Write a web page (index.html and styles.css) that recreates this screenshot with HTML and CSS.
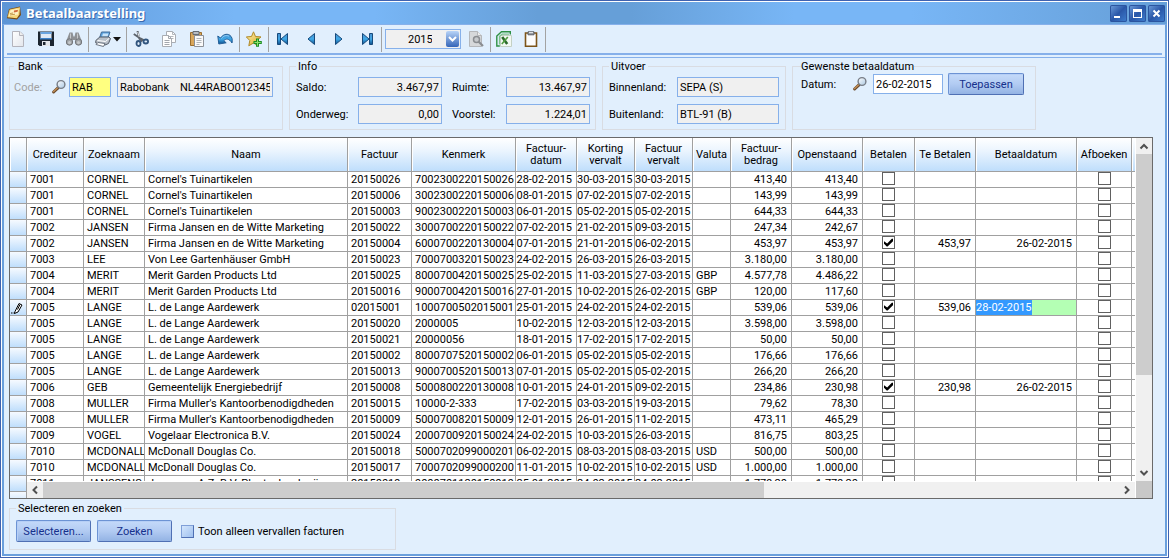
FILE: index.html
```html
<!DOCTYPE html>
<html lang="nl">
<head>
<meta charset="utf-8">
<title>Betaalbaarstelling</title>
<link rel="stylesheet" href="styles.css">
</head>
<body>
<svg class="defs" aria-hidden="true">
  <defs>
    <linearGradient id="blue" x1="0" y1="0" x2="0" y2="1"><stop offset="0" stop-color="#4a90cf"/><stop offset=".5" stop-color="#3fa9e8"/><stop offset="1" stop-color="#0e4f8c"/></linearGradient>
    <linearGradient id="gold" x1="0" y1="0" x2="1" y2="1"><stop offset="0" stop-color="#fff3b0"/><stop offset="1" stop-color="#d9a520"/></linearGradient>
    <linearGradient id="lens" x1="0" y1="0" x2="1" y2="1"><stop offset="0" stop-color="#ffffff"/><stop offset="1" stop-color="#a9c6e0"/></linearGradient>
    <linearGradient id="paper" x1="0" y1="0" x2="1" y2="1"><stop offset="0" stop-color="#ffffff"/><stop offset="1" stop-color="#e3e6ec"/></linearGradient>
    <symbol id="magnifier" viewBox="0 0 16 16">
      <path d="M2.600 13 7 8.800" stroke="#6b4a2c" stroke-width="3" stroke-linecap="round"/>
      <path d="M2.600 12.500 6.400 8.900" stroke="#c29058" stroke-width="1.400" stroke-linecap="round"/>
      <circle cx="10" cy="5.500" r="3.900" fill="url(#lens)" stroke="#777d86" stroke-width="1.400"/>
    </symbol>
  </defs>
</svg>
<div class="window">
  <header class="titlebar">
    <svg class="app-icon" viewBox="0 0 16 16"><path d="M3 4 14 1.500 15 10 11 14.500.8 13.200z" fill="#7a4a10"/><path d="M3.600 4.400 14 2.200 13.400 9.600 10.800 13.200 1.500 12.200z" fill="#f6d77c"/><path d="m4.500 5.200 8-1.400-.5 5.800-9 1.600z" fill="#fff2c4"/><path d="m8 5.500 4-.7-.4 2-3.800.6z" fill="#d26a3a"/><path d="m4 8.500 3-.5M4 10l5-.8" stroke="#c49a4a"/></svg>
    <h1 class="title">Betaalbaarstelling</h1>
    <div class="window-buttons">
      <button class="winbtn" aria-label="Minimaliseren"><svg viewBox="0 0 17 17"><path d="M4 11h6v2H4z" fill="#fff"/></svg></button>
      <button class="winbtn" aria-label="Maximaliseren"><svg viewBox="0 0 17 17"><path d="M4 4h9v9H4zM5 7v5h7V7z" fill="#fff" fill-rule="evenodd"/></svg></button>
      <button class="winbtn" aria-label="Sluiten"><svg viewBox="0 0 17 17"><path d="m5.500 5.500 6 6m0-6-6 6" stroke="#fff" stroke-width="2"/></svg></button>
    </div>
  </header>
  <div class="client">
    <div class="toolbar" role="toolbar">
      <button class="tool" aria-label="Nieuw"><svg viewBox="0 0 16 16"><path d="M2.500.5h7.500l3.500 3.500v11.500h-11z" fill="url(#paper)" stroke="#b4b4bc"/><path d="M9.500.5v4h4" fill="#eee" stroke="#b4b4bc"/></svg></button>
      <button class="tool" aria-label="Opslaan"><svg viewBox="0 0 16 16"><path d="M0 .5h16V15H1.500L0 13.500z" fill="#1d2630"/><path d="M2.500 1h11v6h-11z" fill="#dfeaf6"/><path d="M2.500 1h11v2h-11z" fill="#6aa5e0"/><path d="M2 7h12v1.500H2z" fill="#3f82c8"/><path d="M4 10h8v5H4z" fill="#e4e6ea"/><path d="M5 11h2.500v3H5z" fill="#1d2630"/></svg></button>
      <button class="tool" aria-label="Zoeken"><svg viewBox="0 0 16 16"><path d="M3.500 1.500h3l1 4h1l1-4h3l3 8v3.500h-5V9h-5v4h-5V9.500z" fill="#8f9296"/><circle cx="3.500" cy="11" r="3.200" fill="#9ea2a6" stroke="#74777b"/><circle cx="12.500" cy="11" r="3.200" fill="#9ea2a6" stroke="#74777b"/><path d="M4.500 2.500v5M11.500 2.500v5" stroke="#c8cacc"/><circle cx="3.500" cy="11.500" r="1.500" fill="#c5c8cb"/><circle cx="12.500" cy="11.500" r="1.500" fill="#c5c8cb"/></svg></button>
      <span class="separator"></span>
      <button class="tool tool-menu" aria-label="Afdrukken"><svg viewBox="0 0 16 16"><path d="M6.500 1h8.500l-2 6H4.500z" fill="#5ba3e0" stroke="#456c96"/><path d="M8 2.500h5.500l-1 3H7z" fill="#c9e4fa"/><path d="m.8 9.500 4-3.500h9l1.700 1.500-2 5-3.500 1.500L.8 12z" fill="#b9c0c9" stroke="#545b66"/><path d="m2.500 9.500 8 1 3.500-3" stroke="#fff" fill="none"/><path d="m3 11.500 7 1-1.500 3-7.500-2z" fill="#fff" stroke="#6c7480"/></svg><svg class="caret" viewBox="0 0 8 5"><path d="M0 0h8L4 4.500z" fill="#111"/></svg></button>
      <span class="separator"></span>
      <button class="tool" aria-label="Knippen"><svg viewBox="0 0 16 16"><path d="m4.500 0 1.800 7.500 3 3M.8 3l6.500 4.500 4 2" stroke="#5e646c" stroke-width="2" fill="none"/><path d="m4.700 1 1.600 5" stroke="#e4e7ea"/><ellipse cx="5.500" cy="12.500" rx="2" ry="2.500" fill="#dceaf8" stroke="#31557e" stroke-width="1.800"/><ellipse cx="12.800" cy="10.500" rx="2.300" ry="2" fill="#dceaf8" stroke="#31557e" stroke-width="1.800"/></svg></button>
      <button class="tool" aria-label="Kopiëren"><svg viewBox="0 0 16 16"><path d="M5.500.5h6l3 3v8h-9z" fill="#fff" stroke="#a9adb3"/><path d="M11.500.5v3h3M7.500 5.500h5M7.500 7.500h5" stroke="#b3b7bd" fill="none"/><path d="M1.500 4.500h6l3 3v8h-9z" fill="#fff" stroke="#a9adb3"/><path d="M7.500 4.500v3h3M3.500 9.500h5M3.500 11.500h5M3.500 13.500h5" stroke="#a3a7ad" fill="none"/></svg></button>
      <button class="tool" aria-label="Plakken"><svg viewBox="0 0 16 16"><path d="M1.500 1.500h11v13h-11z" fill="#d9a75c" stroke="#9a6f30"/><path d="M4 .5h6v3H4z" fill="#b8bdc4" stroke="#666c74"/><path d="M5.500 4.500h9v11h-9z" fill="#fafafa" stroke="#8d9198"/><path d="M7.500 7.500h5M7.500 9.500h5M7.500 11.500h5M7.500 13.500h3" stroke="#b1b5ba"/></svg></button>
      <button class="tool" aria-label="Ongedaan maken"><svg viewBox="0 0 16 16"><path d="m.8 5 1 8 7.400-1.200-2.400-2c2-2.300 5-2.800 8.200 2.200.8-3.500 0-6.500-2.500-8C9.500 2.400 6 3.500 3.500 7z" fill="url(#blue)" stroke="#235f98"/><path d="M4.500 7.500c2-3 5-3.500 7.500-2.300" stroke="#8fcdf5" fill="none"/></svg></button>
      <span class="separator"></span>
      <button class="tool" aria-label="Favoriet toevoegen"><svg viewBox="0 0 16 16"><path d="m7.500.8 2 4.700 5.500.4-4 3.600 1 5.300-4.500-2.800-4.700 2.800 1-5.300L.3 5.900l5.200-.4z" fill="url(#gold)" stroke="#b08a2a"/><path d="M10 7.500h3V10h2.800v3H13v2.700h-3V13H7.500v-3H10z" fill="#1d8f24"/><path d="M11 8.500h1v2.500h2.800v1H12v2.700h-1V12H8.500v-1H11z" fill="#8fe06e"/></svg></button>
      <span class="separator"></span>
      <button class="tool" aria-label="Eerste"><svg viewBox="0 0 16 16"><path d="M2.500 2.500h3v11h-3z" fill="url(#blue)" stroke="#164a7c"/><path d="M12.500 2.500v11L6 8z" fill="url(#blue)" stroke="#164a7c"/></svg></button>
      <button class="tool" aria-label="Vorige"><svg viewBox="0 0 16 16"><path d="M11.500 2.500v11L5 8z" fill="url(#blue)" stroke="#164a7c"/></svg></button>
      <button class="tool" aria-label="Volgende"><svg viewBox="0 0 16 16"><path d="M4.500 2.500v11L11 8z" fill="url(#blue)" stroke="#164a7c"/></svg></button>
      <button class="tool" aria-label="Laatste"><svg viewBox="0 0 16 16"><path d="M10.500 2.500h3v11h-3z" fill="url(#blue)" stroke="#164a7c"/><path d="M3.500 2.500v11L10 8z" fill="url(#blue)" stroke="#164a7c"/></svg></button>
      <span class="separator"></span>
      <div class="year">
        <select class="year-select" aria-label="Boekjaar"><option>2015</option></select>
        <svg class="year-arrow" viewBox="0 0 13 16"><path d="m3 6 3.500 3.500L10 6" stroke="#fff" stroke-width="2" fill="none"/></svg>
      </div>
      <button class="tool" aria-label="Voorbeeld"><svg viewBox="0 0 16 16"><path d="M1.500.5h8l4 4v11h-12z" fill="#d6d8da" stroke="#b5b7ba"/><path d="M9.500.5v4h4" fill="#eee" stroke="#b5b7ba"/><circle cx="8.500" cy="8.500" r="3" fill="#c6c9cc" stroke="#8a8d91" stroke-width="1.500"/><path d="m10.500 10.500 4.500 4.500" stroke="#8a8d91" stroke-width="2.200"/></svg></button>
      <span class="separator"></span>
      <button class="tool tool-excel" aria-label="Exporteren naar Excel"><svg viewBox="0 0 16 16"><path d="M4.500 4.500h11v11h-11z" fill="#f2f8f2" stroke="#c4d0c4"/><path d="M14.300 3.500V.8H5.500L.8 5v10h3" fill="none" stroke="#2f9144" stroke-width="1.400"/><path d="M3.500 13.500V5.300l2.700-2.100h6.800" fill="none" stroke="#7fc48c" stroke-width="1.200"/><path d="m6.200 6 5 7" stroke="#2b6b2b" stroke-width="2.600"/><path d="m11.800 6-6 7" stroke="#4f9c3f" stroke-width="1.600"/></svg></button>
      <button class="tool" aria-label="Klembord"><svg viewBox="0 0 16 16"><path d="M2.500 2h11v13.300h-11z" fill="#fcfcfc" stroke="#7d5418" stroke-width="1.600"/><path d="M5 .8h6v3H5z" fill="#9ba0a6" stroke="#5a5f66"/><path d="M6 1.500h4" stroke="#dfe2e5"/></svg></button>
      <span class="separator"></span>
    </div>

    <main class="content">
      <div class="panels">
        <fieldset class="panel panel-bank">
          <legend>Bank</legend>
          <div class="fields">
            <label class="muted" for="bank-code">Code:</label>
            <button class="lookup" aria-label="Bank zoeken"><svg><use href="#magnifier"/></svg></button>
            <input class="field field-active code" id="bank-code" value="RAB">
            <input class="field account" aria-label="Rekening" readonly value="Rabobank    NL44RABO0123456789">
          </div>
        </fieldset>
        <fieldset class="panel panel-info">
          <legend>Info</legend>
          <div class="fields">
            <label for="saldo">Saldo:</label><input class="field amount" id="saldo" readonly value="3.467,97">
            <label for="ruimte">Ruimte:</label><input class="field amount" id="ruimte" readonly value="13.467,97">
            <label for="onderweg">Onderweg:</label><input class="field amount" id="onderweg" readonly value="0,00">
            <label for="voorstel">Voorstel:</label><input class="field amount" id="voorstel" readonly value="1.224,01">
          </div>
        </fieldset>
        <fieldset class="panel panel-output">
          <legend>Uitvoer</legend>
          <div class="fields">
            <label for="binnenland">Binnenland:</label><input class="field" id="binnenland" readonly value="SEPA (S)">
            <label for="buitenland">Buitenland:</label><input class="field" id="buitenland" readonly value="BTL-91 (B)">
          </div>
        </fieldset>
        <fieldset class="panel panel-date">
          <legend>Gewenste betaaldatum</legend>
          <div class="fields">
            <label for="datum">Datum:</label>
            <button class="lookup" aria-label="Datum kiezen"><svg><use href="#magnifier"/></svg></button>
            <input class="field field-edit" id="datum" value="26-02-2015">
            <button class="button">Toepassen</button>
          </div>
        </fieldset>
      </div>

      <section class="grid">
        <div class="grid-view">
          <table class="invoices">
            <colgroup>
              <col class="c-mark"><col class="c-creditor"><col class="c-search"><col><col class="c-invoice"><col class="c-ref"><col class="c-amount"><col class="c-date"><col class="c-date"><col class="c-currency"><col class="c-amount"><col class="c-open"><col class="c-pay"><col class="c-amount"><col class="c-paydate"><col class="c-writeoff"><col class="c-rest">
            </colgroup>
            <thead>
              <tr><th></th><th>Crediteur</th><th>Zoeknaam</th><th>Naam</th><th>Factuur</th><th>Kenmerk</th><th>Factuur-<br>datum</th><th>Korting<br>vervalt</th><th>Factuur<br>vervalt</th><th>Valuta</th><th>Factuur-<br>bedrag</th><th>Openstaand</th><th>Betalen</th><th>Te Betalen</th><th>Betaaldatum</th><th>Afboeken</th><th></th></tr>
            </thead>
            <tbody id="rows"></tbody>
          </table>
          <div class="hscroll">
            <svg class="arrow" viewBox="0 0 16 16"><path d="M10 4.500 6.500 8l3.500 3.500" fill="none" stroke="#505050" stroke-width="2"/></svg>
            <div class="track"><div class="thumb"></div></div>
            <svg class="arrow" viewBox="0 0 16 16"><path d="M6 4.500 9.500 8 6 11.500" fill="none" stroke="#505050" stroke-width="2"/></svg>
          </div>
        </div>
        <div class="vscroll">
          <svg class="arrow" viewBox="0 0 16 16"><path d="M4.500 10.500 8 7l3.500 3.500" fill="none" stroke="#505050" stroke-width="2"/></svg>
          <div class="track"><div class="thumb"></div></div>
          <svg class="arrow" viewBox="0 0 16 16"><path d="M4.500 6 8 9.500 11.500 6" fill="none" stroke="#505050" stroke-width="2"/></svg>
          <div class="corner"></div>
        </div>
      </section>

      <fieldset class="panel panel-select">
        <legend>Selecteren en zoeken</legend>
        <div class="fields">
          <button class="button">Selecteren...</button>
          <button class="button">Zoeken</button>
          <label class="option"><input class="option-box" type="checkbox">Toon alleen vervallen facturen</label>
        </div>
      </fieldset>
    </main>
  </div>
</div>
<script src="grid.js"></script>
</body>
</html>
```
FILE: grid.js
```js
// creditor | search name | name | invoice | reference | invoice date | discount until | due | currency | amount | open | to pay | pay date
const invoices = `
7001|CORNEL|Cornel's Tuinartikelen|20150026|7002300220150026|28-02-2015|30-03-2015|30-03-2015||413,40|413,40
7001|CORNEL|Cornel's Tuinartikelen|20150006|3002300220150006|08-01-2015|07-02-2015|07-02-2015||143,99|143,99
7001|CORNEL|Cornel's Tuinartikelen|20150003|9002300220150003|06-01-2015|05-02-2015|05-02-2015||644,33|644,33
7002|JANSEN|Firma Jansen en de Witte Marketing|20150022|3000700220150022|07-02-2015|21-02-2015|09-03-2015||247,34|242,67
7002|JANSEN|Firma Jansen en de Witte Marketing|20150004|6000700220130004|07-01-2015|21-01-2015|06-02-2015||453,97|453,97|453,97|26-02-2015
7003|LEE|Von Lee Gartenhäuser GmbH|20150023|7000700320150023|24-02-2015|26-03-2015|26-03-2015||3.180,00|3.180,00
7004|MERIT|Merit Garden Products Ltd|20150025|8000700420150025|25-02-2015|11-03-2015|27-03-2015|GBP|4.577,78|4.486,22
7004|MERIT|Merit Garden Products Ltd|20150016|9000700420150016|27-01-2015|10-02-2015|26-02-2015|GBP|120,00|117,60
7005|LANGE|L. de Lange Aardewerk|02015001|1000700502015001|25-01-2015|24-02-2015|24-02-2015||539,06|539,06|539,06|28-02-2015
7005|LANGE|L. de Lange Aardewerk|20150020|2000005|10-02-2015|12-03-2015|12-03-2015||3.598,00|3.598,00
7005|LANGE|L. de Lange Aardewerk|20150021|20000056|18-01-2015|17-02-2015|17-02-2015||50,00|50,00
7005|LANGE|L. de Lange Aardewerk|20150002|8000707520150002|06-01-2015|05-02-2015|05-02-2015||176,66|176,66
7005|LANGE|L. de Lange Aardewerk|20150013|9000700520150013|07-01-2015|05-02-2015|05-02-2015||266,20|266,20
7006|GEB|Gemeentelijk Energiebedrijf|20150008|5000800220130008|10-01-2015|24-01-2015|09-02-2015||234,86|230,98|230,98|26-02-2015
7008|MULLER|Firma Muller's Kantoorbenodigdheden|20150015|10000-2-333|17-02-2015|03-03-2015|19-03-2015||79,62|78,30
7008|MULLER|Firma Muller's Kantoorbenodigdheden|20150009|5000700820150009|12-01-2015|26-01-2015|11-02-2015||473,11|465,29
7009|VOGEL|Vogelaar Electronica B.V.|20150024|2000700920150024|24-02-2015|10-03-2015|26-03-2015||816,75|803,25
7010|MCDONALL|McDonall Douglas Co.|20150018|5000702099000201|06-02-2015|08-03-2015|08-03-2015|USD|500,00|500,00
7010|MCDONALL|McDonall Douglas Co.|20150017|7000702099000200|11-01-2015|10-02-2015|10-02-2015|USD|1.000,00|1.000,00
7011|JANSSENS|Janssens A.Z. B.V. Plantenkwekerij|20150019|9000701120150019|25-01-2015|24-02-2015|24-02-2015||1.779,20|1.779,20
`.trim().split("\n").map(line => line.split("|"));

const editedRow = 8;
const pencil = '<svg class="pencil" viewBox="0 0 14 14"><path d="m5 10.500 4-8 3 1.500-4 7-3.500 1.500z" fill="#fff" stroke="#000"/><path d="m7.500 8.500 2.500-5M1 12h1.500M3.500 12H5" stroke="#000"/></svg>';
const box = (label, on) => `<td class="tick"><input class="tick-box" type="checkbox" aria-label="${label}"${on ? " checked" : ""}></td>`;

const rows = invoices.map((r, i) => {
  const text = r.slice(0, 5).map(v => `<td>${v}</td>`).join("");
  const dates = r.slice(5, 8).map(v => `<td class="num">${v}</td>`).join("");
  const amounts = r.slice(9, 11).map(v => `<td class="num">${v}</td>`).join("");
  const payDate = i === editedRow
    ? `<td class="editing"><input class="cell-edit" id="cell-edit" aria-label="Betaaldatum" value="${r[12]}"></td>`
    : `<td class="num">${r[12] || ""}</td>`;
  return `<tr><td class="mark">${i === editedRow ? pencil : ""}</td>${text}${dates}<td>${r[8]}</td>${amounts}${box("Betalen", r[11])}<td class="num">${r[11] || ""}</td>${payDate}${box("Afboeken", false)}<td></td></tr>`;
});
rows.push('<tr><td class="mark"></td><td colspan="16"></td></tr>');

document.getElementById("rows").innerHTML = rows.join("");
document.getElementById("cell-edit").select();
```
FILE: styles.css
```css
* { box-sizing: border-box; }

body {
  margin: 0;
  font: 11px/13px Roboto, "Liberation Sans", Arial, sans-serif;
  color: #000;
}

button, input, select { font: inherit; color: inherit; margin: 0; padding: 0; }
button { background: none; border: 0; }
svg { display: block; }
.defs { position: absolute; width: 0; height: 0; }

/* Window frame */
.window {
  display: flex;
  flex-direction: column;
  height: 100vh;
  border: 1px solid #3f62b0;
  padding: 1px;
  background: #fff;
}

.titlebar {
  display: flex;
  align-items: center;
  gap: 4px;
  height: 22px;
  flex: none;
  padding: 0 2px 0 4px;
  background: linear-gradient(90deg, #5c95d6, #78b6f6 20%, #78b6f6 32%, #669fd8 46%, #669fd8 54%, #78b6f6 68%, #78b6f6 78%, #669fd8);
}
.app-icon { width: 16px; height: 16px; }
.title {
  flex: 1;
  margin: 0;
  font: bold 13px/20px "Noto Sans", sans-serif;
  color: #fff;
  text-shadow: 1px 1px 0 #3a68ac;
}
.window-buttons { display: flex; gap: 2px; }
.winbtn {
  width: 17px;
  height: 17px;
  border-radius: 2px;
  background: linear-gradient(135deg, #6f9fdc, #2a57a8 50%, #3f7fd0);
  box-shadow: inset 0 0 0 1px #2b55a0;
}

.client {
  display: flex;
  flex-direction: column;
  flex: 1;
  min-height: 0;
  border: 2px solid #6a9fdc;
  border-top: 1px solid #86b0ea;
  background: #e1effd;
}

/* Toolbar */
.toolbar {
  display: flex;
  align-items: center;
  flex: none;
  height: 33px;
  border-bottom: 1px solid #86b0ea;
  padding-bottom: 4px;
  background: linear-gradient(#86b0ea, #86b0ea) 3px 28px / calc(100% - 6px) 2px no-repeat;
}
.tool {
  display: flex;
  align-items: center;
  justify-content: center;
  width: 28px;
  height: 26px;
}
.tool svg { width: 16px; height: 16px; }
.tool-menu { width: 37px; gap: 2px; }
.tool-menu .caret { width: 8px; height: 5px; }
.tool-excel { width: 26px; }
.separator { width: 1px; height: 25px; background: #a3a3a3; }
.year { position: relative; width: 76px; margin: 0 1px 0 3px; }
.year-select {
  display: block;
  appearance: none;
  width: 100%;
  height: 20px;
  border: 1px solid #86b0ea;
  border-radius: 0;
  padding: 0 28px 0 22px;
  background: #f0f0f0;
}
.year-arrow {
  position: absolute;
  top: 2px;
  right: 2px;
  width: 13px;
  height: 16px;
  border-radius: 2px;
  background: linear-gradient(#b8d4f8, #3565b8);
  pointer-events: none;
}

/* Panels */
.content {
  display: flex;
  flex-direction: column;
  flex: 1;
  min-height: 0;
  padding: 2px 12px 4px 5px;
}
.panels { display: flex; gap: 6px; }
.panel {
  min-width: 0;
  margin: 0;
  border: 1px solid #d9dce2;
  padding: 4px 6px 5px;
}
.panel legend { padding: 0 2px; }
.fields { display: grid; align-items: center; row-gap: 7px; }
.panel-bank { width: 274px; padding-left: 4px; padding-right: 9px; }
.panel-bank legend { padding: 0 4px; }
.panel-bank .fields { grid-template-columns: 37px 18px 42px 1fr; }
.panel-info { width: 307px; }
.panel-info .fields { grid-template-columns: 52px 84px 44px 84px; column-gap: 10px; }
.panel-output { width: 184px; }
.panel-output .fields { grid-template-columns: 68px 1fr; }
.panel-date { width: 244px; padding: 0 12px 5px 8px; }
.panel-date legend { padding: 0; }
.panel-date .fields { grid-template-columns: 51px 21px 70px 76px; }
.panel-date .button { margin-left: 5px; width: 76px; }
.muted { color: #a2a2a2; }
.lookup svg { width: 16px; height: 16px; }
.field {
  width: 100%;
  min-width: 0;
  height: 20px;
  border: 1px solid #86b0ea;
  padding: 0 2px;
  background: #f0f0f0;
  white-space: pre;
}
.account { width: auto; margin-left: 6px; }
.field-active { background: #ffff80; }
.field-edit { background: #fff; }
.amount { text-align: right; }
.button {
  height: 22px;
  border: 1px solid #6c93d4;
  border-right-color: #4f70b4;
  border-bottom-color: #4f70b4;
  border-radius: 2px;
  background: linear-gradient(#c4dafa, #b2cbf2 50%, #93b3e4);
  box-shadow: inset 1px 1px 0 #b6cff6;
  color: #15308c;
}

/* Invoice grid */
.grid {
  display: flex;
  flex: 1;
  min-height: 0;
  margin: 7px 0 3px;
  border: 1px solid #6a6a6a;
  background: #fff;
}
.grid-view { position: relative; flex: 1; min-width: 0; overflow: hidden; }
.invoices {
  width: 100%;
  table-layout: fixed;
  border-collapse: separate;
  border-spacing: 0;
}
.c-mark { width: 17px; }
.c-creditor { width: 57px; }
.c-search { width: 61px; }
.c-invoice { width: 64px; }
.c-ref { width: 104px; }
.c-date { width: 58px; }
.c-currency { width: 38px; }
.c-amount { width: 61px; }
.c-open { width: 71px; }
.c-pay { width: 52px; }
.c-paydate { width: 101px; }
.c-writeoff { width: 55px; }
.c-rest { width: 3px; }
.invoices th {
  height: 34px;
  border-right: 1px solid #a0a0a0;
  border-bottom: 1px solid #a0a0a0;
  padding: 0;
  background: linear-gradient(#fff, #eaf4fe 40%, #bfdefc);
  box-shadow: inset 1px 0 0 #fff;
  font-weight: normal;
  line-height: 12px;
}
.invoices td {
  height: 16px;
  border-right: 1px solid #a0a0a0;
  border-bottom: 1px solid #a0a0a0;
  padding: 0 0 0 3px;
  line-height: 15px;
  white-space: nowrap;
  overflow: hidden;
}
.invoices th:last-child, .invoices td:last-child { border-right: 0; padding: 0; }
.invoices .num { padding: 0 4px 0 0; text-align: right; }
.invoices .mark { padding: 0; background: linear-gradient(#f6faff, #bfdefc); }
.pencil { width: 14px; height: 14px; }
.invoices .tick { padding: 0; }
.tick-box {
  display: block;
  appearance: none;
  width: 13px;
  height: 13px;
  margin: 0 auto 2px;
  border: 1px solid #606060;
  background: #fff;
}
.tick-box:checked::before {
  content: "";
  display: block;
  width: 9px;
  height: 9px;
  margin: 1px;
  background: #000;
  clip-path: polygon(0 35%, 35% 62%, 90% 5%, 100% 10%, 100% 35%, 40% 95%, 30% 95%, 0 65%);
}
.invoices .editing { padding: 0; background: #b4ffb4; }
.cell-edit {
  display: block;
  width: 100%;
  height: 15px;
  border: 0;
  outline: 0;
  background: transparent;
}
.cell-edit::selection { background: #3399ff; color: #fff; }

/* Scroll bars */
.hscroll {
  position: absolute;
  left: 17px;
  right: 0;
  bottom: 0;
  display: flex;
  height: 17px;
  border-top: 1px solid #fff;
  background: #f0f0f0;
}
.vscroll { display: flex; flex-direction: column; width: 17px; background: #f0f0f0; border-left: 1px solid #fff; }
.arrow { width: 16px; height: 16px; flex: none; }
.track { flex: 1; min-height: 0; }
.thumb { background: #cdcdcd; }
.hscroll .thumb { width: 67%; height: 100%; }
.vscroll .thumb { height: 71%; }
.corner { height: 17px; flex: none; background: #c8c8c8; }

/* Selection panel */
.panel-select { width: 387px; padding-top: 5px; padding-bottom: 7px; }
.panel-select .fields { display: flex; gap: 6px; }
.panel-select .button { width: 75px; }
.option { display: flex; align-items: center; gap: 4px; margin-left: 3px; }
.option-box {
  appearance: none;
  width: 13px;
  height: 13px;
  border: 1px solid #7f9fd8;
  border-right-color: #4f70b4;
  border-bottom-color: #4f70b4;
  background: linear-gradient(135deg, #d3e6fd, #9fc0ee);
}
```
